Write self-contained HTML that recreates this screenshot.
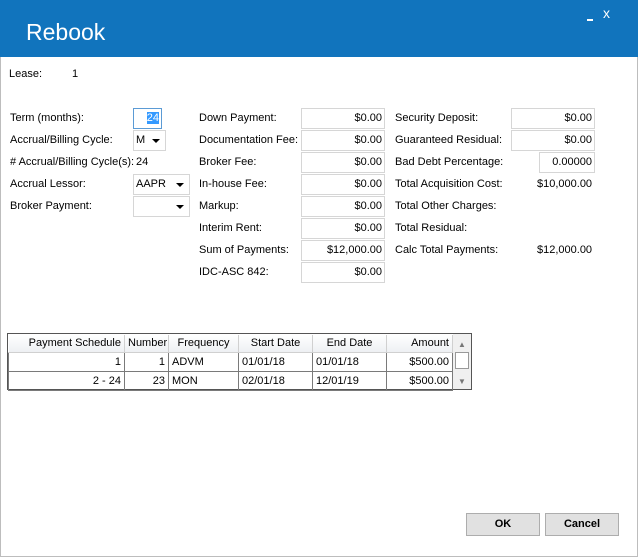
<!DOCTYPE html>
<html><head><style>
*{box-sizing:border-box;margin:0;padding:0}
body{width:638px;height:557px;overflow:hidden;background:#fff;font-family:"Liberation Sans",Arial,sans-serif;font-size:11px;color:#000;position:relative}
.t{position:absolute;white-space:nowrap;line-height:14px}
.i{position:absolute;height:21px;border:1px solid #d6d6d6;text-align:right;padding-right:2px;line-height:19px;background:#fff}
.c{position:absolute;height:21px;border:1px solid #d6d6d6;line-height:19px;padding-left:2px;background:#fff}
.c:after{content:"";position:absolute;right:5px;top:8px;border-left:4px solid transparent;border-right:4px solid transparent;border-top:4px solid #000}
table{border-collapse:collapse;table-layout:fixed;width:444px;position:absolute;left:8px;top:335px;font-size:11px}
td{border:1px solid #7a7a7a;height:19px;padding:0 3px;white-space:nowrap;overflow:hidden}
th{font-weight:normal;height:17px;padding:0 3px;border-right:1px solid #d0d0d0;background:linear-gradient(#fff,#eef0f3);border-bottom:1px solid #d0d0d0;white-space:nowrap;overflow:hidden}
.b{position:absolute;top:513px;height:23px;background:#e1e1e1;border:1px solid #adadad;text-align:center;line-height:21px;font-weight:bold}
</style></head><body>
<div style="position:absolute;left:0;top:0;width:638px;height:57px;background:#1174bd"></div>
<div class="t" style="left:26px;top:18px;font-size:23px;line-height:28px;color:#fff">Rebook</div>
<div style="position:absolute;left:587px;top:19px;width:6px;height:2px;background:#fff"></div>
<div class="t" style="left:603px;top:6px;color:#fff;font-size:14px">x</div>
<div style="position:absolute;left:0;top:57px;width:1px;height:500px;background:#bdbdbd"></div>
<div style="position:absolute;left:637px;top:57px;width:1px;height:500px;background:#bdbdbd"></div>
<div style="position:absolute;left:0;top:556px;width:638px;height:1px;background:#bdbdbd"></div>

<div class="t" style="left:9px;top:67px">Lease:</div>
<div class="t" style="left:72px;top:67px">1</div>

<div class="t" style="left:10px;top:111px">Term (months):</div>
<div class="t" style="left:10px;top:133px">Accrual/Billing Cycle:</div>
<div class="t" style="left:10px;top:155px"># Accrual/Billing Cycle(s):</div>
<div class="t" style="left:136px;top:155px">24</div>
<div class="t" style="left:10px;top:177px">Accrual Lessor:</div>
<div class="t" style="left:10px;top:199px">Broker Payment:</div>
<div class="i" style="left:133px;top:108px;width:29px;border-color:#5b9bd5"><span style="background:#3399ff;color:#fff">24</span></div>
<div class="c" style="left:133px;top:130px;width:33px">M</div>
<div class="c" style="left:133px;top:174px;width:57px">AAPR</div>
<div class="c" style="left:133px;top:196px;width:57px"></div>

<div class="t" style="left:199px;top:111px">Down Payment:</div>
<div class="t" style="left:199px;top:133px">Documentation Fee:</div>
<div class="t" style="left:199px;top:155px">Broker Fee:</div>
<div class="t" style="left:199px;top:177px">In-house Fee:</div>
<div class="t" style="left:199px;top:199px">Markup:</div>
<div class="t" style="left:199px;top:221px">Interim Rent:</div>
<div class="t" style="left:199px;top:243px">Sum of Payments:</div>
<div class="t" style="left:199px;top:265px">IDC-ASC 842:</div>
<div class="i" style="left:301px;top:108px;width:84px">$0.00</div>
<div class="i" style="left:301px;top:130px;width:84px">$0.00</div>
<div class="i" style="left:301px;top:152px;width:84px">$0.00</div>
<div class="i" style="left:301px;top:174px;width:84px">$0.00</div>
<div class="i" style="left:301px;top:196px;width:84px">$0.00</div>
<div class="i" style="left:301px;top:218px;width:84px">$0.00</div>
<div class="i" style="left:301px;top:240px;width:84px">$12,000.00</div>
<div class="i" style="left:301px;top:262px;width:84px">$0.00</div>

<div class="t" style="left:395px;top:111px">Security Deposit:</div>
<div class="t" style="left:395px;top:133px">Guaranteed Residual:</div>
<div class="t" style="left:395px;top:155px">Bad Debt Percentage:</div>
<div class="t" style="left:395px;top:177px">Total Acquisition Cost:</div>
<div class="t" style="left:395px;top:199px">Total Other Charges:</div>
<div class="t" style="left:395px;top:221px">Total Residual:</div>
<div class="t" style="left:395px;top:243px">Calc Total Payments:</div>
<div class="i" style="left:511px;top:108px;width:84px">$0.00</div>
<div class="i" style="left:511px;top:130px;width:84px">$0.00</div>
<div class="i" style="left:539px;top:152px;width:56px">0.00000</div>
<div class="t" style="left:537px;top:177px">$10,000.00</div>
<div class="t" style="left:537px;top:243px">$12,000.00</div>

<div style="position:absolute;left:7px;top:333px;width:465px;height:57px;border:1px solid #555;background:#fff"></div>
<table>
<colgroup><col style="width:116px"><col style="width:44px"><col style="width:70px"><col style="width:74px"><col style="width:74px"><col style="width:66px"></colgroup>
<tr><th style="text-align:right">Payment Schedule</th><th>Number</th><th>Frequency</th><th>Start Date</th><th>End Date</th><th style="text-align:right">Amount</th></tr>
<tr><td style="text-align:right">1</td><td style="text-align:right">1</td><td>ADVM</td><td>01/01/18</td><td>01/01/18</td><td style="text-align:right">$500.00</td></tr>
<tr><td style="text-align:right">2 - 24</td><td style="text-align:right">23</td><td>MON</td><td>02/01/18</td><td>12/01/19</td><td style="text-align:right">$500.00</td></tr>
</table>
<div style="position:absolute;left:453px;top:334px;width:18px;height:55px;background:#f0f0f0"></div>
<div style="position:absolute;left:455px;top:352px;width:14px;height:17px;background:#fff;border:1px solid #999"></div>
<div class="t" style="left:458px;top:338px;font-size:8px;color:#777">▲</div>
<div class="t" style="left:458px;top:375px;font-size:8px;color:#777">▼</div>

<div class="b" style="left:466px;width:74px">OK</div>
<div class="b" style="left:545px;width:74px">Cancel</div>
</body></html>
